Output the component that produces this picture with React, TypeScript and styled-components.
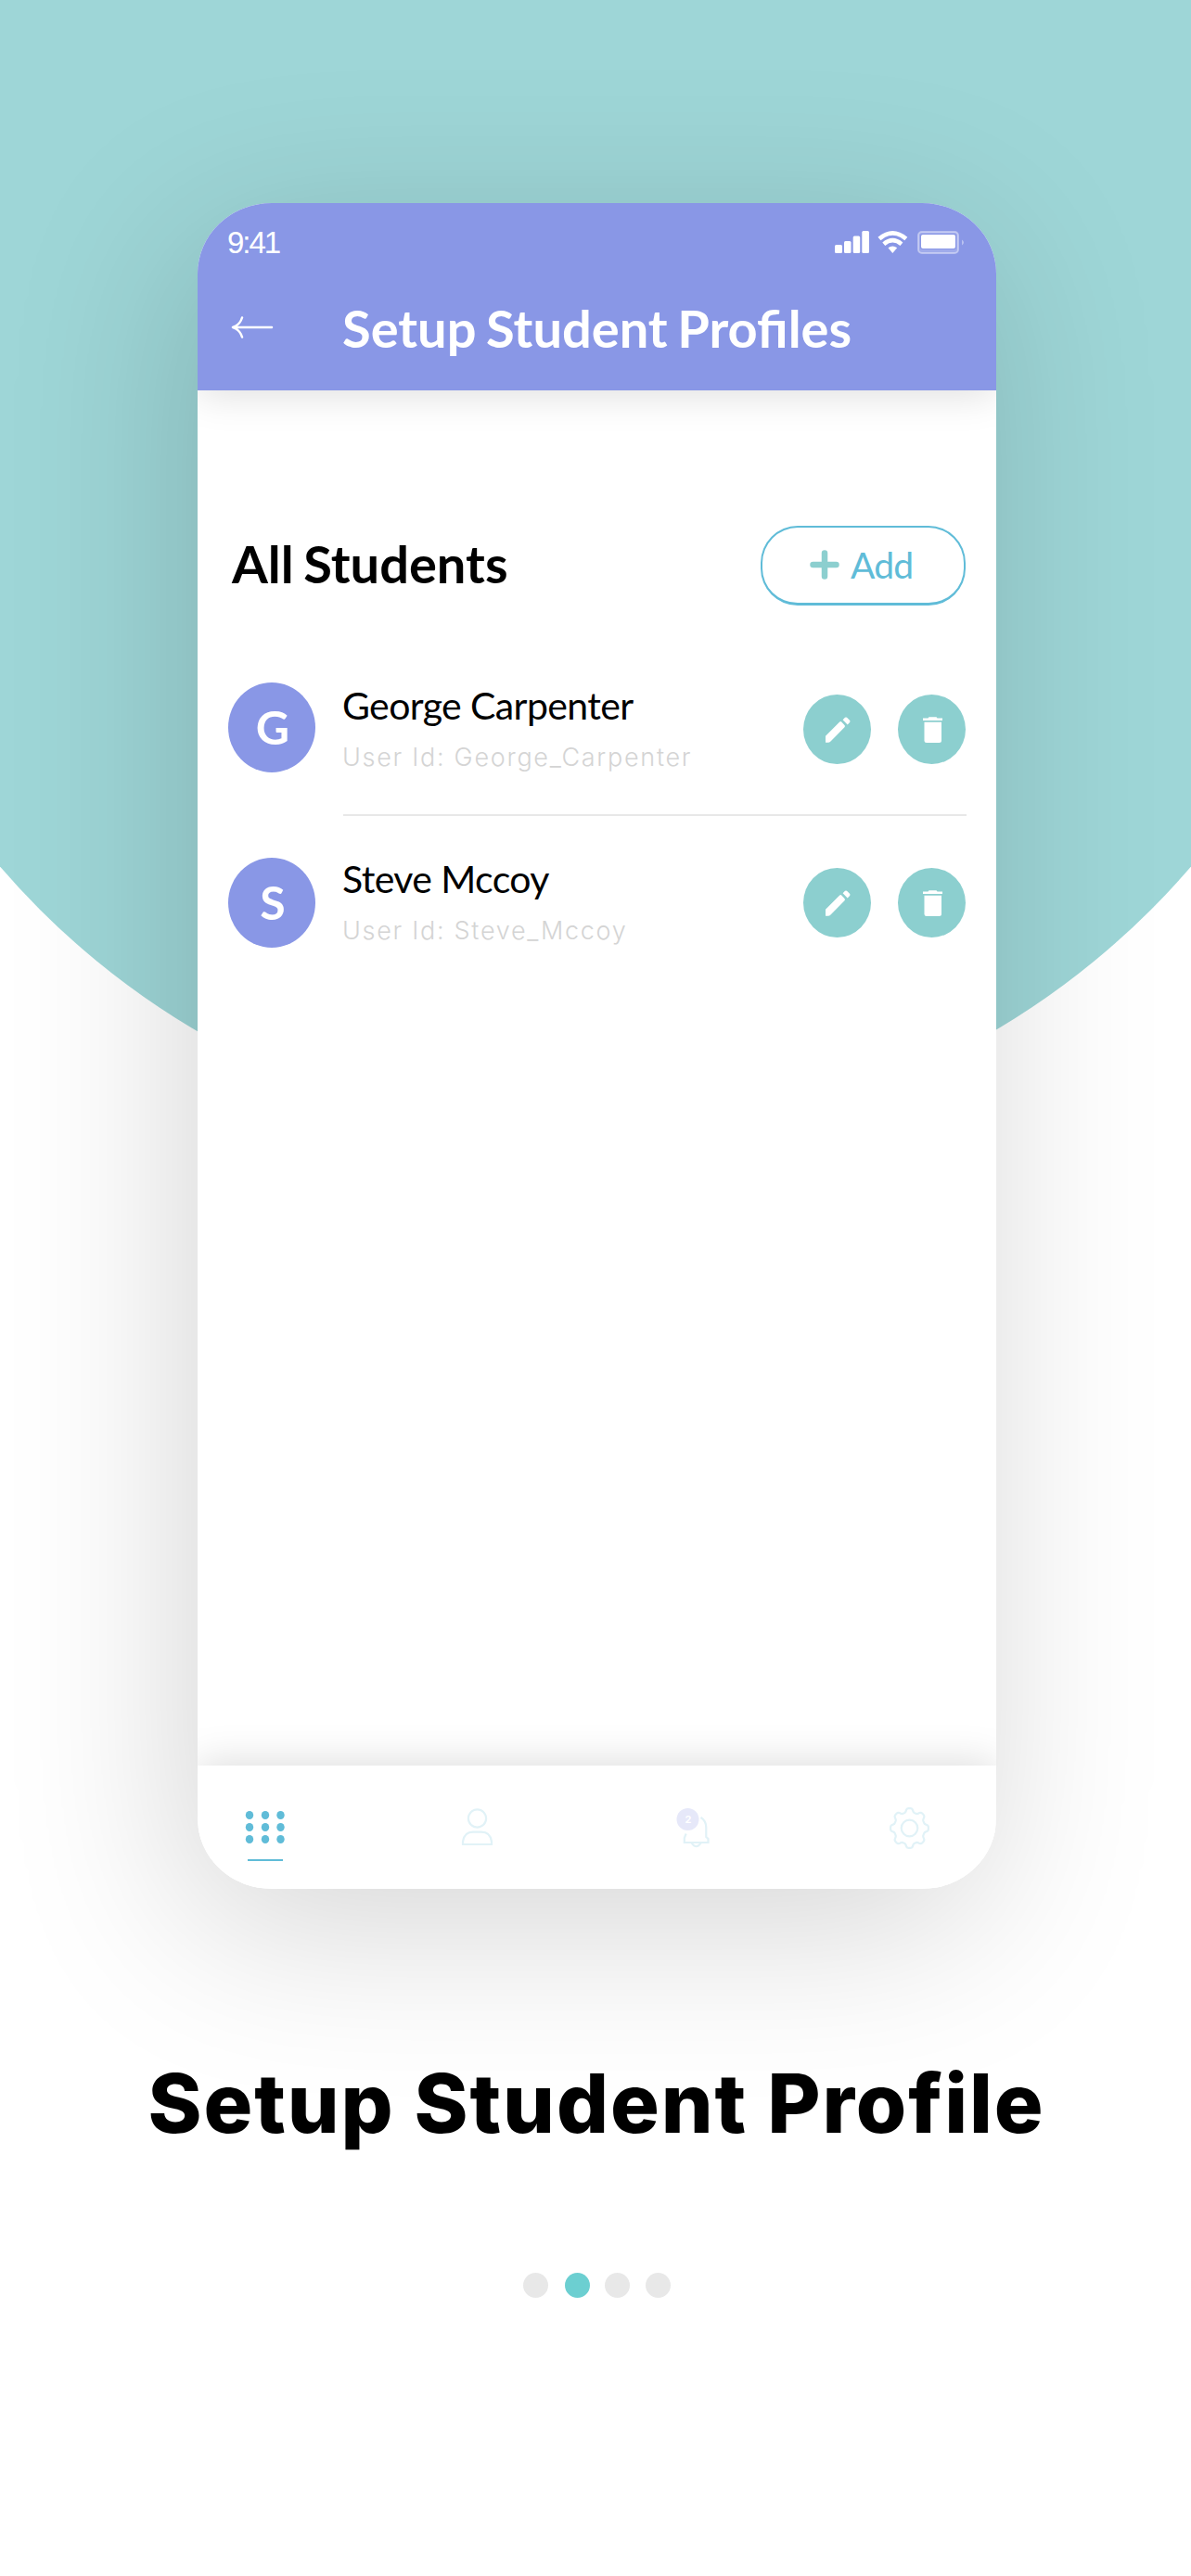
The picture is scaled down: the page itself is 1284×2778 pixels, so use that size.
import React from "react";
import styled, { createGlobalStyle } from "styled-components";

const GlobalStyle = createGlobalStyle`
  *, *::before, *::after { box-sizing: border-box; }
  body { margin: 0; background: #fff; }
  h1, h2, p { margin: 0; font-weight: inherit; }
  button { padding: 0; border: 0; background: none; font: inherit; }
  svg { display: block; flex: none; }
`;

const lavender = "#8997e6";
const teal = "#8ccfcf";
const blue = "#60bcd8";
const paleBlue = "#e1f2f7";

const Page = styled.main`
  position: relative;
  isolation: isolate;
  width: 1284px;
  height: 2778px;
  padding-top: 219px;
  overflow: hidden;
  background: #fff;
  font-family: Lato, "Open Sans", sans-serif;
`;

const Backdrop = styled.div`
  position: absolute;
  z-index: -1;
  top: -465px;
  left: -205px;
  width: 1694px;
  height: 1694px;
  border-radius: 50%;
  background: #9ed6d7;
`;

const Phone = styled.section`
  display: flex;
  flex-direction: column;
  width: 861px;
  height: 1818px;
  border-radius: 80px / 76px;
  overflow: hidden;
  background: #fff;
`;

const PhoneShadow = styled.div`
  width: 861px;
  margin-left: 213px;
  border-radius: 80px / 76px;
  box-shadow: -14px 40px 190px rgba(0, 0, 0, 0.17);
`;

const Header = styled.header`
  position: relative;
  flex: none;
  height: 202px;
  background: ${lavender};
  color: #fff;
  box-shadow: 0 5px 40px rgba(0, 0, 0, 0.13);
`;

const StatusBar = styled.div`
  display: flex;
  align-items: center;
  height: 84px;
  padding: 0 33px 0 31px;
`;

const Clock = styled.span`
  flex: 1;
  padding: 2px 0 0 1px;
  font: 400 33px/36px "Liberation Sans", Arial, sans-serif;
  letter-spacing: -2px;
`;

const TitleBar = styled.div`
  display: flex;
  align-items: center;
  height: 102px;
  padding-left: 36px;
  gap: 73px;
`;

const HeaderTitle = styled.h1`
  font-size: 56px;
  line-height: 68px;
  font-weight: 700;
  letter-spacing: 0;
  word-spacing: -3px;
  white-space: nowrap;
`;

const Content = styled.div`
  flex: 1;
  padding: 146px 33px 0 33px;
`;

const SectionHead = styled.div`
  display: flex;
  align-items: center;
  justify-content: space-between;
  height: 86px;
  padding-left: 4px;
  margin-bottom: 83px;
`;

const SectionTitle = styled.h2`
  padding-bottom: 5px;
  font-size: 56px;
  line-height: 68px;
  font-weight: 700;
  letter-spacing: 0;
  word-spacing: -3px;
  color: #000;
`;

const AddButton = styled.button`
  display: flex;
  align-items: center;
  width: 221px;
  height: 86px;
  padding: 0 0 1px 51px;
  gap: 12px;
  border: 2px solid ${blue};
  border-bottom-width: 3px;
  border-radius: 40px;
  color: ${blue};
  font-size: 39px;
  line-height: 48px;
  letter-spacing: -0.8px;
`;

const Student = styled.article`
  display: flex;
  height: 189px;
`;

const Avatar = styled.div`
  flex: none;
  display: flex;
  align-items: center;
  justify-content: center;
  width: 94px;
  height: 97px;
  margin-right: 30px;
  padding: 0 0 2px 2px;
  border-radius: 50%;
  background: ${lavender};
  color: #fff;
  font-size: 50px;
  line-height: 60px;
  font-weight: 700;
`;

const Details = styled.div<{ $last: boolean }>`
  display: flex;
  flex: 1;
  height: 144px;
  margin-top: ${(p) => (p.$last ? -2 : 0)}px;
  margin-right: -1px;
  padding-right: 1px;
  justify-content: space-between;
  border-bottom: 2px solid ${(p) => (p.$last ? "transparent" : "#e8e8e8")};
`;

const Name = styled.p`
  margin-left: -1px;
  font-size: 41px;
  line-height: 50px;
  letter-spacing: -0.6px;
  color: #000;
  white-space: nowrap;
`;

const UserId = styled.p`
  margin-top: 15px;
  margin-left: -1px;
  font: 300 27px/32px Inter, sans-serif;
  letter-spacing: 1.7px;
  color: #d4d4d4;
  white-space: nowrap;
`;

const Actions = styled.div`
  display: flex;
  gap: 29px;
  margin-top: 13px;
`;

const RoundButton = styled.button`
  display: flex;
  align-items: center;
  justify-content: center;
  width: 73px;
  height: 75px;
  border-radius: 50%;
  background: ${teal};
`;

const Nav = styled.nav`
  position: relative;
  display: flex;
  flex: none;
  height: 133px;
  padding: 44px 0 0 51px;
  background: #fff;
  box-shadow: 0 -5px 40px rgba(0, 0, 0, 0.13);
`;

const NavItem = styled.div<{ $width: number }>`
  width: ${(p) => p.$width}px;
`;

const Caption = styled.h2`
  margin-top: 166px;
  padding-left: 2px;
  text-align: center;
  font: 800 88px/130px Inter, sans-serif;
  letter-spacing: 1.9px;
  color: #000;
  white-space: nowrap;
`;

const Pager = styled.div`
  display: flex;
  justify-content: center;
  gap: 17px;
  margin-top: 118px;
  padding-left: 3px;
`;

const PageDot = styled.span<{ $active?: boolean }>`
  width: 27px;
  height: 27px;
  margin-left: ${(p) => (p.$active ? 1 : 0)}px;
  margin-right: ${(p) => (p.$active ? -1 : 0)}px;
  border-radius: 50%;
  background: ${(p) => (p.$active ? "#6ccfd1" : "#e8e8e8")};
`;

const StatusIcons = () => (
  <svg width="142" height="28" viewBox="899 247 142 28" fill="#fff">
    <rect x="900" y="264" width="8" height="9" rx="1.5" />
    <rect x="910" y="260" width="7.5" height="13" rx="1.5" />
    <rect x="919.7" y="254.5" width="7.5" height="18.5" rx="1.5" />
    <rect x="929.3" y="249" width="7.7" height="24" rx="1.5" />
    <g fill="none" stroke="#fff" strokeWidth="4.6">
      <path d="M948 257.4Q962.3 245.2 976.8 257.4" />
      <path d="M952.8 263.2Q962.3 255.2 971.9 263.2" />
    </g>
    <path d="M957.5 267.3Q962.3 263.7 967.2 267.3L962.3 273Z" />
    <rect x="990" y="250" width="43" height="23" rx="4" fill="#fff" fillOpacity=".2" stroke="#fff" strokeOpacity=".4" strokeWidth="2" />
    <rect x="992" y="252" width="39" height="17" rx="2" fill={lavender} />
    <rect x="993" y="253" width="37" height="15" rx="2" />
    <path d="M1037.2 258.5Q1040.5 261.5 1037.2 264.5Z" fillOpacity=".5" />
  </svg>
);

const BackArrow = () => (
  <svg width="47" height="28" viewBox="0 0 47 28" fill="none" stroke="#fff" strokeWidth="2.5" strokeLinecap="round" strokeLinejoin="round">
    <path d="M2 13H44M12 2.5C10.5 7.5 6.5 11.5 2 13C6.5 14.5 10.5 18.5 12 23.5" />
  </svg>
);

const Plus = () => (
  <svg width="32" height="32" viewBox="0 0 32 32" stroke={teal} strokeWidth="6.5" strokeLinecap="round">
    <path d="M16 3.5V28.5M3.5 16H28.5" />
  </svg>
);

const Pencil = () => (
  <svg width="28" height="28" viewBox="0 0 28 28" fill="#fff">
    <path d="M1 20.8L16.2 5.5Q17.2 4.700 18.2 5.5L21.700 9.300Q22.300 10.300 21.500 11.200L7 26Q5.800 27.800 4 27.800H1Z" />
    <path d="M19.600 3.300L22 .8Q23 0 24 .8L27 3.800Q28 4.900 27.100 6L24.700 8.400Z" />
  </svg>
);

const Trash = () => (
  <svg width="24" height="28" viewBox="0 0 24 28" fill="#fff">
    <path d="M2 1.500H7.500L8.500 .3H16.500L17.500 1.500H23V4H2Z" />
    <path d="M3.500 5.800H22V25.500Q22 28 19.500 28H6Q3.500 28 3.500 25.500Z" />
  </svg>
);

const GridIcon = () => (
  <svg width="46" height="62" viewBox="264 1948 46 62" fill={blue}>
    {[1957.5, 1970.5, 1983.5].map((y) =>
      [269, 286, 302.5].map((x) => <ellipse key={`${x}-${y}`} cx={x} cy={y} rx="4.2" ry="4.5" />)
    )}
    <rect x="267" y="2005" width="38" height="2" />
  </svg>
);

const PersonIcon = () => (
  <svg width="38" height="46" viewBox="496 1948 38 46" fill="none" stroke={paleBlue} strokeWidth="2.2">
    <circle cx="514.5" cy="1961" r="9.6" />
    <path d="M499 1989V1986Q500.500 1975.700 510 1975.700H519Q528.500 1975.700 530 1986V1989Z" />
  </svg>
);

const BadgeDigit = styled.span`
  position: absolute;
  top: 7px;
  left: 1px;
  width: 24px;
  text-align: center;
  font: 700 11px/14px Inter, sans-serif;
  color: #fff;
`;

const BellWrap = styled.div`
  position: relative;
  width: 38px;
`;

const BellIcon = () => (
  <BellWrap>
    <svg width="38" height="46" viewBox="729 1948 38 46" fill="none" stroke={paleBlue} strokeWidth="2.2">
      <path d="M755.500 1960Q761.300 1963.500 761.300 1971V1981L763.500 1983V1987H737.800V1982L739.700 1977.500" />
      <path d="M745.500 1987.500Q750.600 1995 755.700 1987.500" />
      <circle cx="741.5" cy="1962" r="12" fill="#e6e8f9" stroke="none" />
    </svg>
    <BadgeDigit>2</BadgeDigit>
  </BellWrap>
);

const gearPath = (() => {
  const points: string[] = [];
  for (let i = 0; i <= 160; i++) {
    const angle = (i / 160) * Math.PI * 2;
    const radius = 18.5 + 2 * Math.tanh(2 * Math.cos(8 * angle));
    points.push(`${(23.5 + radius * Math.cos(angle)).toFixed(2)} ${(23.5 + radius * 1.05 * Math.sin(angle)).toFixed(2)}`);
  }
  return `M${points.join("L")}Z`;
})();

const GearIcon = () => (
  <svg width="48" height="48" viewBox="0 0 48 48" fill="none" stroke={paleBlue} strokeWidth="2.2">
    <path d={gearPath} />
    <circle cx="23.5" cy="23.5" r="8.8" />
  </svg>
);

const students = [
  { name: "George Carpenter", id: "George_Carpenter" },
  { name: "Steve Mccoy", id: "Steve_Mccoy" },
];

export default function App() {
  return (
    <Page>
      <GlobalStyle />
      <Backdrop />
      <PhoneShadow>
        <Phone>
          <Header>
            <StatusBar>
              <Clock>9:41</Clock>
              <StatusIcons />
            </StatusBar>
            <TitleBar>
              <BackArrow />
              <HeaderTitle>Setup Student Profiles</HeaderTitle>
            </TitleBar>
          </Header>
          <Content>
            <SectionHead>
              <SectionTitle>All Students</SectionTitle>
              <AddButton><Plus />Add</AddButton>
            </SectionHead>
            {students.map((s, i) => (
              <Student key={s.id}>
                <Avatar>{s.name[0]}</Avatar>
                <Details $last={i === students.length - 1}>
                  <div>
                    <Name>{s.name}</Name>
                    <UserId>User Id: {s.id}</UserId>
                  </div>
                  <Actions>
                    <RoundButton aria-label="Edit"><Pencil /></RoundButton>
                    <RoundButton aria-label="Delete"><Trash /></RoundButton>
                  </Actions>
                </Details>
              </Student>
            ))}
          </Content>
          <Nav>
            <NavItem $width={232}><GridIcon /></NavItem>
            <NavItem $width={233}><PersonIcon /></NavItem>
            <NavItem $width={228}><BellIcon /></NavItem>
            <NavItem $width={48}><GearIcon /></NavItem>
          </Nav>
        </Phone>
      </PhoneShadow>
      <Caption>Setup Student Profile</Caption>
      <Pager>
        <PageDot />
        <PageDot $active />
        <PageDot />
        <PageDot />
      </Pager>
    </Page>
  );
}
